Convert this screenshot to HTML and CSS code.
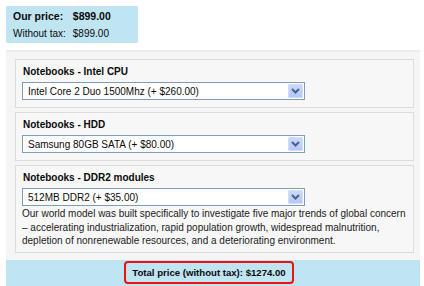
FILE: index.html
```html
<!DOCTYPE html>
<html lang="en">
<head>
  <meta charset="UTF-8">
  <title>Product options</title>
  <link rel="stylesheet" href="styles.css">
</head>
<body>

  <div class="price-box">
    <table>
      <tr class="our-price"><td>Our price:</td><td>$899.00</td></tr>
      <tr><td>Without tax:</td><td>$899.00</td></tr>
    </table>
  </div>

  <div class="options">
    <div class="option">
      <div class="option-title">Notebooks - Intel CPU</div>
      <div class="select">
        <span class="select-text">Intel Core 2 Duo 1500Mhz (+ $260.00)</span>
        <span class="select-btn"><svg width="9" height="6" viewBox="0 0 9 6"><path d="M1 1l3.5 3.5L8 1" fill="none" stroke="#4d6185" stroke-width="2"/></svg></span>
      </div>
    </div>

    <div class="option">
      <div class="option-title">Notebooks - HDD</div>
      <div class="select">
        <span class="select-text">Samsung 80GB SATA (+ $80.00)</span>
        <span class="select-btn"><svg width="9" height="6" viewBox="0 0 9 6"><path d="M1 1l3.5 3.5L8 1" fill="none" stroke="#4d6185" stroke-width="2"/></svg></span>
      </div>
    </div>

    <div class="option">
      <div class="option-title">Notebooks - DDR2 modules</div>
      <div class="select">
        <span class="select-text">512MB DDR2 (+ $35.00)</span>
        <span class="select-btn"><svg width="9" height="6" viewBox="0 0 9 6"><path d="M1 1l3.5 3.5L8 1" fill="none" stroke="#4d6185" stroke-width="2"/></svg></span>
      </div>
      <p class="option-desc">Our world model was built specifically to investigate five major trends of global concern – accelerating industrialization, rapid population growth, widespread malnutrition, depletion of nonrenewable resources, and a deteriorating environment.</p>
    </div>
  </div>

  <div class="total">
    <span class="total-label">Total price (without tax): $1274.00</span>
  </div>

</body>
</html>
```

FILE: styles.css
```css
body {
  font-family: "Liberation Sans", Arial, sans-serif;
  font-size: 10px;
  color: #0a0a0a;
  background: #fff;
  margin: 0;
  padding: 6px 4px 0 6px;
}

.price-box {
  width: 132px;
  height: 37px;
  box-sizing: border-box;
  background: #bfe4f2;
  border-radius: 2px;
  padding: 2px 0 0 6px;
}

.price-box table {
  border-collapse: collapse;
}

.price-box td {
  padding: 1px 6px 1px 1px;
  line-height: 15px;
}

.our-price td {
  font-weight: bold;
  font-size: 10.5px;
}

.options {
  margin-top: 7px;
  background: #f5f5f5;
  border-top: 2px solid #ececec;
  padding: 7px 6px 7px 9px;
}

.option {
  background: #f7f7f7;
  border: 1px solid #dcdcdc;
  padding: 5px 6px 7px 6px;
  margin-bottom: 4px;
}

.option:last-child {
  margin-bottom: 0;
  padding-bottom: 4px;
}

.option-title {
  font-weight: bold;
  line-height: 14px;
  margin-bottom: 3px;
  padding-left: 1px;
}

.select {
  width: 283px;
  height: 18px;
  box-sizing: border-box;
  border: 1px solid #7f9db9;
  background: #fff;
  display: flex;
  align-items: center;
  justify-content: space-between;
  padding: 0 1px 0 5px;
}

.select-btn {
  width: 15px;
  height: 14px;
  box-sizing: border-box;
  border: 1px solid #d2ddf8;
  border-radius: 1px;
  background: linear-gradient(#cbd9fb, #b4c8f6);
  display: flex;
  align-items: center;
  justify-content: center;
}

.option-desc {
  margin: 1px 0 0 0;
  line-height: 13.5px;
  color: #1a1a1a;
}

.total {
  background: #bfe4f2;
  height: 26px;
  display: flex;
  align-items: center;
  justify-content: center;
  padding-right: 8px;
}

.total-label {
  font-weight: bold;
  font-size: 9.6px;
  border: 2px solid #e11;
  border-radius: 4px;
  padding: 4px 6px;
  line-height: 11px;
}
```
